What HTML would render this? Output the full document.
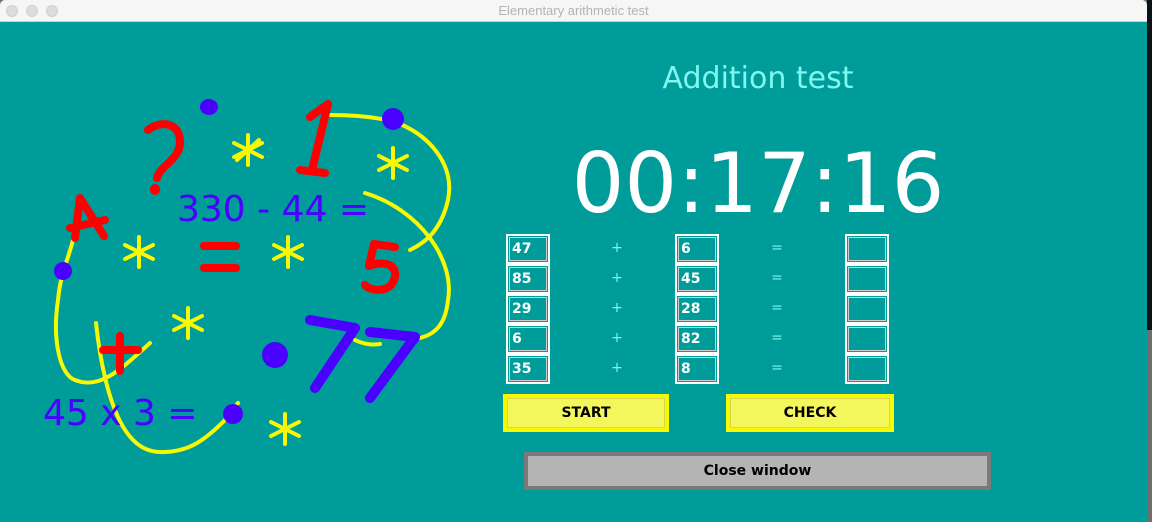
<!DOCTYPE html>
<html><head><meta charset="utf-8"><style>
*{margin:0;padding:0;box-sizing:border-box}
body{width:1152px;height:522px;overflow:hidden;background:#6e6e6e;position:relative;font-family:"DejaVu Sans","Liberation Sans",sans-serif}
#dark{position:absolute;left:1147px;top:0;width:5px;height:330px;background:#0b1216}
#win{position:absolute;left:0;top:0;width:1147px;height:522px;background:#009c9a;border-radius:5px 5px 0 0;overflow:hidden}
#bar{position:absolute;left:0;top:0;width:1147px;height:22px;background:#f6f6f6;border-bottom:1px solid #d0d0d0;text-align:center;font-size:13px;line-height:22px;color:#b4b4b4;font-family:"Liberation Sans",sans-serif}
.dot{position:absolute;top:5px;width:12px;height:12px;border-radius:50%;background:#dcdcdc;border:1px solid #cfcfcf}
.a{position:absolute}
.box{position:absolute;width:44px;height:30px;border:2px solid #fff;outline:1px solid #cfcfcf;outline-offset:-4px;color:#fff;font-weight:bold;font-size:14px;line-height:26px;padding-left:4px}
.op{position:absolute;color:#7ff4ee;font-size:14px;width:20px;text-align:center}
.btn{position:absolute;background:#f4f75c;border:4px solid #f8f800;outline:1px solid #d6d84a;outline-offset:-5px;font-weight:bold;font-size:14px;text-align:center;color:#000}
</style></head><body>
<div id="dark"></div>
<div id="win">
<div id="bar">Elementary arithmetic test</div>
<div class="dot" style="left:6px"></div><div class="dot" style="left:26px"></div><div class="dot" style="left:46px"></div>
<svg class="a" style="left:0;top:0" width="520" height="522">
<g fill="none" stroke="#f8f800" stroke-width="4" stroke-linecap="round">
<path d="M330 115 C360 115 380 118 395 122 C430 135 455 165 448 200 C440 235 420 245 410 250"/>
<path d="M365 193 C420 210 455 260 448 300 C445 330 430 335 420 338"/>
<path d="M73 240 C68 260 60 275 58 300 C52 340 60 375 75 380 C100 390 120 370 150 343"/>
<path d="M96 323 C100 360 108 400 122 425 C135 448 150 453 165 452 C190 451 205 440 225 420 L238 403"/>
<path d="M355 340 C365 345 375 345 380 344"/>
</g>
<g fill="#4a00ff">
<ellipse cx="209" cy="107" rx="9" ry="8"/>
<circle cx="393" cy="119" r="11"/>
<circle cx="63" cy="271" r="9"/>
<circle cx="275" cy="355" r="13"/>
<circle cx="233" cy="414" r="10"/>
</g>
<g stroke="#f8f800" stroke-width="4" stroke-linecap="round">
<path d="M248 135v30M234 143l28 14M262 143l-28 14M237 160l22 -20"/>
<path d="M393 148v30M379 156l28 14M407 156l-28 14"/>
<path d="M139 237v30M125 245l28 14M153 245l-28 14"/>
<path d="M288 237v30M274 245l28 14M302 245l-28 14"/>
<path d="M188 308v30M174 316l28 14M202 316l-28 14"/>
<path d="M285 414v30M271 422l28 14M299 422l-28 14"/>
</g>
<g fill="none" stroke="#ff0000" stroke-width="8" stroke-linecap="round" stroke-linejoin="round">
<path d="M148 130 C160 120 180 122 180 142 C180 160 160 165 157 178"/>
<path d="M155 189l0 1" stroke-width="10"/>
<path d="M328 104 L312 170 M300 170 L325 173 M328 104 L310 117"/>
<path d="M75 238 L80 198 L104 236 M70 228 L105 220"/>
<path d="M204 246h32M204 268h32"/>
<path d="M395 247 L374 244 L369 266 C390 258 400 270 393 282 C388 292 372 292 365 285"/>
<path d="M103 350h35M120 336v35"/>
</g>
<g fill="none" stroke="#4a00ff" stroke-width="10" stroke-linecap="round" stroke-linejoin="round">
<path d="M310 320 L355 328 L315 388"/>
<path d="M370 332 L415 337 L370 398"/>
</g>
<text x="177" y="221" font-family="DejaVu Sans" font-size="36" fill="#4a00ff">330 - 44 =</text>
<text x="43" y="425" font-family="DejaVu Sans" font-size="36" fill="#4a00ff">45 x 3 =</text>
</svg>
<div class="a" style="left:560px;top:61px;width:396px;text-align:center;color:#7ff7f0;font-size:30px">Addition test</div>
<div class="a" style="left:540px;top:136px;width:436px;text-align:center;color:#fff;font-size:83px;line-height:96px">00:17:16</div>

<div class="box" style="left:506px;top:234px">47</div><div class="op" style="left:607px;top:240px">+</div><div class="box" style="left:675px;top:234px">6</div><div class="op" style="left:767px;top:240px">=</div><div class="box" style="left:845px;top:234px"></div>
<div class="box" style="left:506px;top:264px">85</div><div class="op" style="left:607px;top:270px">+</div><div class="box" style="left:675px;top:264px">45</div><div class="op" style="left:767px;top:270px">=</div><div class="box" style="left:845px;top:264px"></div>
<div class="box" style="left:506px;top:294px">29</div><div class="op" style="left:607px;top:300px">+</div><div class="box" style="left:675px;top:294px">28</div><div class="op" style="left:767px;top:300px">=</div><div class="box" style="left:845px;top:294px"></div>
<div class="box" style="left:506px;top:324px">6</div><div class="op" style="left:607px;top:330px">+</div><div class="box" style="left:675px;top:324px">82</div><div class="op" style="left:767px;top:330px">=</div><div class="box" style="left:845px;top:324px"></div>
<div class="box" style="left:506px;top:354px">35</div><div class="op" style="left:607px;top:360px">+</div><div class="box" style="left:675px;top:354px">8</div><div class="op" style="left:767px;top:360px">=</div><div class="box" style="left:845px;top:354px"></div>

<div class="btn" style="left:503px;top:394px;width:166px;height:38px;line-height:30px">START</div>
<div class="btn" style="left:726px;top:394px;width:168px;height:38px;line-height:30px">CHECK</div>
<div class="a" style="left:524px;top:452px;width:467px;height:38px;background:#b4b4b4;border:4px solid #7a7a7a;font-weight:bold;font-size:14px;line-height:30px;text-align:center;color:#000">Close window</div>
</div>
</body></html>
